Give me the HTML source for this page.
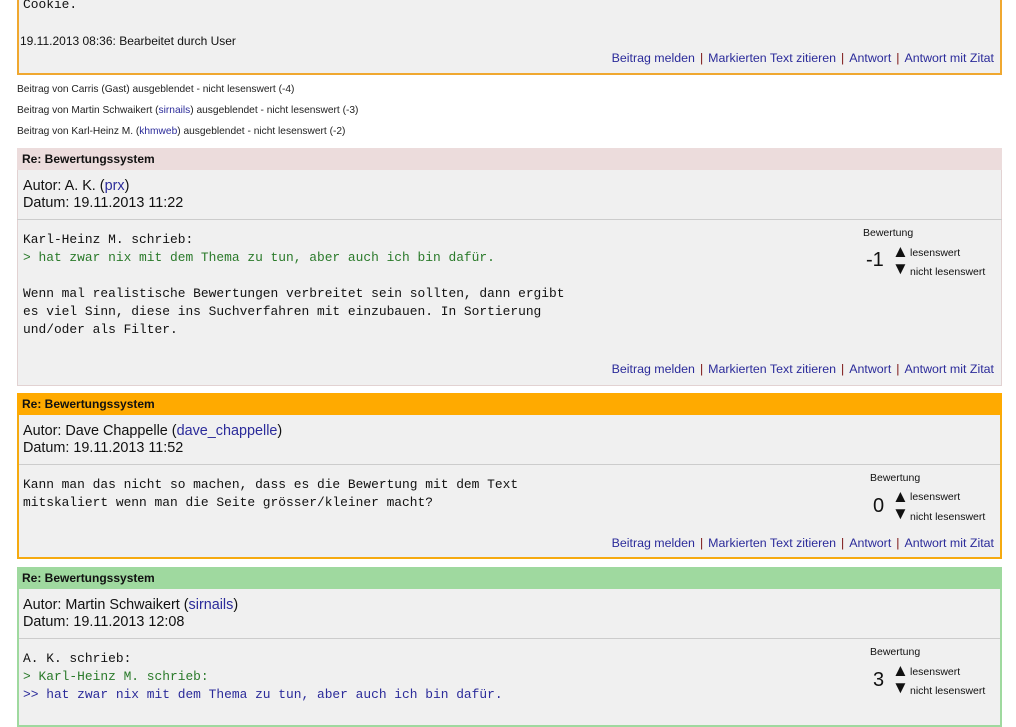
<!DOCTYPE html>
<html><head><meta charset="utf-8"><style>
*{margin:0;padding:0;box-sizing:border-box}
body{width:1016px;height:696px;overflow:hidden;background:#fff;font-family:"Liberation Sans",Arial,sans-serif;color:#111;position:relative}
.a{position:absolute;white-space:nowrap}
.box{position:absolute;left:17px;width:985px;background:#f0f0f0}
.hd{position:absolute;left:0;right:0;top:0;height:22px;font-weight:bold;font-size:12px;line-height:22px;padding-left:4px}
.mono{font-family:"Liberation Mono","DejaVu Sans Mono",monospace;font-size:12.9px;line-height:18px}
.lk{font-size:12.4px;color:#2b2b9a}
.lk span{color:#7a1010;margin:0 5px}
a{color:#2b2b9a;text-decoration:none}
.q{color:#2a7a2a}
.sm{font-size:10.2px;color:#222}
.r{font-size:10.5px}
.tri{font-size:17px;line-height:17px}
.au{font-size:14.4px;line-height:17px}
</style></head><body>
<div class="box" style="top:-10px;height:85px;border:2px solid #f0a830"></div>
<div class="a mono" style="left:23px;top:-4px">Cookie.</div>
<div class="a" style="left:20px;top:34px;font-size:12px">19.11.2013 08:36: Bearbeitet durch User</div>
<div class="a lk" style="right:22px;top:51px">Beitrag melden<span>|</span>Markierten Text zitieren<span>|</span>Antwort<span>|</span>Antwort mit Zitat</div>

<div class="a sm" style="left:17px;top:84px">Beitrag von Carris (Gast) ausgeblendet - nicht lesenswert (-4)</div>
<div class="a sm" style="left:17px;top:105px">Beitrag von Martin Schwaikert (<a>sirnails</a>) ausgeblendet - nicht lesenswert (-3)</div>
<div class="a sm" style="left:17px;top:126px">Beitrag von Karl-Heinz M. (<a>khmweb</a>) ausgeblendet - nicht lesenswert (-2)</div>

<div class="box" style="top:148px;height:238px;border:1px solid #e2d2d2">
<div class="hd" style="background:#ecdcdc;top:-1px;left:-1px;right:-1px;padding-left:5px">Re: Bewertungssystem</div>
<div style="position:absolute;left:-1px;right:-1px;top:70px;border-top:1px solid #ccc"></div>
</div>
<div class="a au" style="left:23px;top:178px">Autor: A. K. (<a>prx</a>)<br>Datum: 19.11.2013 11:22</div>
<div class="a mono" style="left:23px;top:231px">Karl-Heinz M. schrieb:<br><span class="q">&gt; hat zwar nix mit dem Thema zu tun, aber auch ich bin dafür.</span><br><br>Wenn mal realistische Bewertungen verbreitet sein sollten, dann ergibt<br>es viel Sinn, diese ins Suchverfahren mit einzubauen. In Sortierung<br>und/oder als Filter.</div>
<div class="a r" style="left:863px;top:227px">Bewertung</div>
<div class="a" style="left:866px;top:249px;font-size:20px">-1</div>
<div class="a tri" style="left:892px;top:243px">▲<br>▼</div>
<div class="a r" style="left:910px;top:247px">lesenswert</div>
<div class="a r" style="left:910px;top:266px">nicht lesenswert</div>
<div class="a lk" style="right:22px;top:362px">Beitrag melden<span>|</span>Markierten Text zitieren<span>|</span>Antwort<span>|</span>Antwort mit Zitat</div>

<div class="box" style="top:393px;height:166px;border:2px solid #f5aa10">
<div class="hd" style="background:#ffaa00;top:-2px;left:-2px;right:-2px;padding-left:5px">Re: Bewertungssystem</div>
<div style="position:absolute;left:0;right:0;top:69px;border-top:1px solid #ccc"></div>
</div>
<div class="a au" style="left:23px;top:423px">Autor: Dave Chappelle (<a>dave_chappelle</a>)<br>Datum: 19.11.2013 11:52</div>
<div class="a mono" style="left:23px;top:476px">Kann man das nicht so machen, dass es die Bewertung mit dem Text<br>mitskaliert wenn man die Seite grösser/kleiner macht?</div>
<div class="a r" style="left:870px;top:472px">Bewertung</div>
<div class="a" style="left:873px;top:495px;font-size:20px">0</div>
<div class="a tri" style="left:892px;top:488px">▲<br>▼</div>
<div class="a r" style="left:910px;top:491px">lesenswert</div>
<div class="a r" style="left:910px;top:511px">nicht lesenswert</div>
<div class="a lk" style="right:22px;top:536px">Beitrag melden<span>|</span>Markierten Text zitieren<span>|</span>Antwort<span>|</span>Antwort mit Zitat</div>

<div class="box" style="top:567px;height:160px;border:2px solid #9fd99f">
<div class="hd" style="background:#9fd99f;top:-2px;left:-2px;right:-2px;padding-left:5px">Re: Bewertungssystem</div>
<div style="position:absolute;left:0;right:0;top:69px;border-top:1px solid #ccc"></div>
</div>
<div class="a au" style="left:23px;top:597px">Autor: Martin Schwaikert (<a>sirnails</a>)<br>Datum: 19.11.2013 12:08</div>
<div class="a mono" style="left:23px;top:650px">A. K. schrieb:<br><span class="q">&gt; Karl-Heinz M. schrieb:</span><br><span style="color:#2b2b9a">&gt;&gt; hat zwar nix mit dem Thema zu tun, aber auch ich bin dafür.</span></div>
<div class="a r" style="left:870px;top:646px">Bewertung</div>
<div class="a" style="left:873px;top:669px;font-size:20px">3</div>
<div class="a tri" style="left:892px;top:662px">▲<br>▼</div>
<div class="a r" style="left:910px;top:666px">lesenswert</div>
<div class="a r" style="left:910px;top:685px">nicht lesenswert</div>
</body></html>
